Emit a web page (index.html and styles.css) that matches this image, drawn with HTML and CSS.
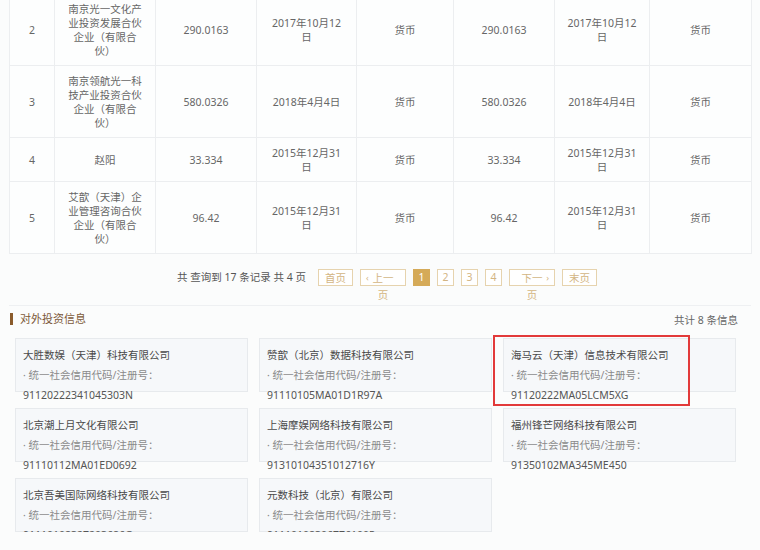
FILE: index.html
```html
<!DOCTYPE html>
<html>
<head>
  <meta charset="utf-8">
  <title>股东信息</title>
  <link rel="stylesheet" href="styles.css">
</head>
<body>
<div class="page">

  <table class="holders">
    <colgroup>
      <col class="c-no"><col class="c-name"><col class="c-amt"><col class="c-date"><col class="c-way">
      <col class="c-amt"><col class="c-date2"><col class="c-way2">
    </colgroup>
    <tr>
      <td>2</td><td>南京光一文化产业投资发展合伙企业（有限合伙）</td><td>290.0163</td><td>2017年10月12日</td><td>货币</td>
      <td>290.0163</td><td>2017年10月12日</td><td>货币</td>
    </tr>
    <tr>
      <td>3</td><td>南京领航光一科技产业投资合伙企业（有限合伙）</td><td>580.0326</td><td>2018年4月4日</td><td>货币</td>
      <td>580.0326</td><td>2018年4月4日</td><td>货币</td>
    </tr>
    <tr>
      <td>4</td><td>赵阳</td><td>33.334</td><td>2015年12月31日</td><td>货币</td>
      <td>33.334</td><td>2015年12月31日</td><td>货币</td>
    </tr>
    <tr>
      <td>5</td><td>艾歆（天津）企业管理咨询合伙企业（有限合伙）</td><td>96.42</td><td>2015年12月31日</td><td>货币</td>
      <td>96.42</td><td>2015年12月31日</td><td>货币</td>
    </tr>
  </table>

  <div class="pager">
    <span class="total">共 查询到 17 条记录 共 4 页</span>
    <a class="btn">首页</a>
    <a class="btn step prev"><i>&lsaquo;</i>上一页</a>
    <a class="btn num on">1</a>
    <a class="btn num">2</a>
    <a class="btn num">3</a>
    <a class="btn num">4</a>
    <a class="btn step next">下一页<i>&rsaquo;</i></a>
    <a class="btn">末页</a>
  </div>

  <div class="section-head">
    <h3>对外投资信息</h3>
    <span class="count">共计 8 条信息</span>
  </div>

  <ul class="cards">
    <li>
      <p class="name">大胜数娱（天津）科技有限公司</p>
      <p class="label">· 统一社会信用代码/注册号：</p>
      <p class="code">91120222341045303N</p>
    </li>
    <li>
      <p class="name">赞歆（北京）数据科技有限公司</p>
      <p class="label">· 统一社会信用代码/注册号：</p>
      <p class="code">91110105MA01D1R97A</p>
    </li>
    <li>
      <span class="mark"></span>
      <p class="name">海马云（天津）信息技术有限公司</p>
      <p class="label">· 统一社会信用代码/注册号：</p>
      <p class="code">91120222MA05LCM5XG</p>
    </li>
    <li>
      <p class="name">北京潮上月文化有限公司</p>
      <p class="label">· 统一社会信用代码/注册号：</p>
      <p class="code">91110112MA01ED0692</p>
    </li>
    <li>
      <p class="name">上海摩娱网络科技有限公司</p>
      <p class="label">· 统一社会信用代码/注册号：</p>
      <p class="code">91310104351012716Y</p>
    </li>
    <li>
      <p class="name">福州锋芒网络科技有限公司</p>
      <p class="label">· 统一社会信用代码/注册号：</p>
      <p class="code">91350102MA345ME450</p>
    </li>
    <li>
      <p class="name">北京吾美国际网络科技有限公司</p>
      <p class="label">· 统一社会信用代码/注册号：</p>
      <p class="code">91110108327203686G</p>
    </li>
    <li>
      <p class="name">元数科技（北京）有限公司</p>
      <p class="label">· 统一社会信用代码/注册号：</p>
      <p class="code">91110108306776100P</p>
    </li>
  </ul>

</div>
</body>
</html>
```

FILE: styles.css
```css
* { box-sizing: border-box; }
body {
  margin: 0;
  font-family: "Noto Sans", "Noto Sans CJK SC", sans-serif;
  font-size: 10.5px;
  color: #666;
  background: #fbfcfc;
}
.page { padding: 0 9px; }

/* shareholder table */
.holders {
  width: 742px;
  margin-top: -7px;
  border-collapse: collapse;
  table-layout: fixed;
  background: #fdfefe;
}
.holders td {
  border: 1px solid #eceef0;
  padding: 8px 11px 7px;
  line-height: 14px;
  text-align: center;
  vertical-align: middle;
}
.c-no { width: 45px; }
.c-name { width: 101px; }
.c-amt { width: 101px; }
.c-date { width: 100px; }
.c-way { width: 97px; }
.c-date2 { width: 95px; }
.c-way2 { width: 102px; }

/* paging */
.pager {
  display: flex;
  justify-content: center;
  align-items: flex-start;
  gap: 7px;
  height: 37px;
  margin-top: 15px;
  padding-left: 14px;
  border-bottom: 1px solid #eef0f2;
}
.total { height: 17px; line-height: 17px; color: #555; margin-right: 5px; }
.btn {
  position: relative;
  height: 17px;
  padding: 0 6px;
  border: 1px solid #e6d3ae;
  color: #d3b583;
  line-height: 17px;
  text-align: center;
  background: #fff;
}
.btn.num { width: 17px; padding: 0; line-height: 15px; }
.btn.on { background: #d5aa58; border-color: #d5aa58; color: #fff; }
.btn.step { width: 46px; padding: 0 11px; }
.btn.step i {
  position: absolute;
  top: 0;
  font-style: normal;
  font-size: 9px;
  line-height: 15px;
}
.prev i { left: 5px; }
.next i { right: 5px; }

/* outward investments */
.section-head {
  display: flex;
  justify-content: space-between;
  align-items: center;
  height: 24px;
  margin: 1px 13px 0 1px;
}
.section-head h3 {
  margin: 0;
  padding-left: 7px;
  border-left: 3px solid #8a5b2c;
  font-size: 11px;
  font-weight: normal;
  line-height: 12px;
  color: #7d5a3a;
}
.count { color: #666; }

.cards {
  display: grid;
  grid-template-columns: repeat(3, 233px);
  column-gap: 11px;
  row-gap: 16px;
  list-style: none;
  margin: 7px 0 0 6px;
  padding: 0;
}
.cards li {
  position: relative;
  height: 54px;
  padding: 6px 7px 0;
  border: 1px solid #e7eaed;
  background: #f6f8fa;
}
.cards p { margin: 0; line-height: 20px; white-space: nowrap; }
.cards .name { color: #4a4a4a; }
.cards .label { color: #8a8a8a; line-height: 21px; }
.cards .code { color: #555; line-height: 19px; }

/* highlight drawn round a card */
.mark {
  position: absolute;
  left: -11px;
  top: -4px;
  width: 197px;
  height: 71px;
  border: 2px solid #e23a3a;
}
```
